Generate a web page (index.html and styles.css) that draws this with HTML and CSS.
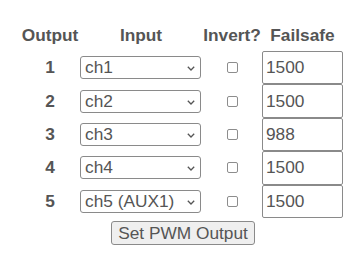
FILE: index.html
```html
<!DOCTYPE html>
<html>
<head>
<meta charset="utf-8">
<link rel="stylesheet" href="styles.css">
</head>
<body>
<form class="pwm">
  <div class="grid">
    <div class="th">Output</div>
    <div class="th">Input</div>
    <div class="th">Invert?</div>
    <div class="th">Failsafe</div>

    <div class="num">1</div>
    <div class="cell"><span class="selwrap"><select class="sel"><option selected>ch1</option><option>ch2</option><option>ch3</option><option>ch4</option><option>ch5 (AUX1)</option></select><svg class="chev" width="8" height="5" viewBox="0 0 8 5"><path d="M0.8 0.8 L4 4 L7.2 0.8" fill="none" stroke="#555" stroke-width="1.3"/></svg></span></div>
    <div class="cell"><input class="chk" type="checkbox"></div>
    <div class="cell"><input class="txt" type="text" value="1500"></div>

    <div class="num">2</div>
    <div class="cell"><span class="selwrap"><select class="sel"><option>ch1</option><option selected>ch2</option><option>ch3</option><option>ch4</option><option>ch5 (AUX1)</option></select><svg class="chev" width="8" height="5" viewBox="0 0 8 5"><path d="M0.8 0.8 L4 4 L7.2 0.8" fill="none" stroke="#555" stroke-width="1.3"/></svg></span></div>
    <div class="cell"><input class="chk" type="checkbox"></div>
    <div class="cell"><input class="txt" type="text" value="1500"></div>

    <div class="num">3</div>
    <div class="cell"><span class="selwrap"><select class="sel"><option>ch1</option><option>ch2</option><option selected>ch3</option><option>ch4</option><option>ch5 (AUX1)</option></select><svg class="chev" width="8" height="5" viewBox="0 0 8 5"><path d="M0.8 0.8 L4 4 L7.2 0.8" fill="none" stroke="#555" stroke-width="1.3"/></svg></span></div>
    <div class="cell"><input class="chk" type="checkbox"></div>
    <div class="cell"><input class="txt" type="text" value="988"></div>

    <div class="num">4</div>
    <div class="cell"><span class="selwrap"><select class="sel"><option>ch1</option><option>ch2</option><option>ch3</option><option selected>ch4</option><option>ch5 (AUX1)</option></select><svg class="chev" width="8" height="5" viewBox="0 0 8 5"><path d="M0.8 0.8 L4 4 L7.2 0.8" fill="none" stroke="#555" stroke-width="1.3"/></svg></span></div>
    <div class="cell"><input class="chk" type="checkbox"></div>
    <div class="cell"><input class="txt" type="text" value="1500"></div>

    <div class="num">5</div>
    <div class="cell"><span class="selwrap"><select class="sel"><option>ch1</option><option>ch2</option><option>ch3</option><option>ch4</option><option selected>ch5 (AUX1)</option></select><svg class="chev" width="8" height="5" viewBox="0 0 8 5"><path d="M0.8 0.8 L4 4 L7.2 0.8" fill="none" stroke="#555" stroke-width="1.3"/></svg></span></div>
    <div class="cell"><input class="chk" type="checkbox"></div>
    <div class="cell"><input class="txt" type="text" value="1500"></div>

    <div class="actions"><button class="btn" type="button">Set PWM Output</button></div>
  </div>
</form>
</body>
</html>
```

FILE: styles.css
```css
html, body {
  margin: 0;
  padding: 0;
  background: #ffffff;
}
body {
  font-family: "Liberation Sans", Arial, sans-serif;
  font-size: 17.3px;
  color: #555555;
}
.pwm {
  padding: 25px 0 0 20px;
}
.grid {
  display: grid;
  grid-template-columns: 60px 122px 60px 81px;
  grid-template-rows: 26px repeat(5, 33.4px) auto;
  width: 323px;
}
.th {
  font-weight: bold;
  text-align: center;
  line-height: 20px;
  white-space: nowrap;
}
.num {
  font-weight: bold;
  display: flex;
  align-items: center;
  justify-content: center;
}
.cell {
  display: flex;
  align-items: center;
  justify-content: center;
}
.selwrap {
  position: relative;
  display: block;
  width: 121px;
  height: 23px;
  margin-right: 1px;
}
.sel {
  -webkit-appearance: none;
  appearance: none;
  box-sizing: border-box;
  display: block;
  width: 121px;
  height: 23px;
  margin: 0;
  font-family: inherit;
  font-size: 17.3px;
  line-height: 21px;
  color: #555555;
  border: 1px solid #8a8a8a;
  border-radius: 3px;
  background: #ffffff;
  padding: 0 16px 0 4px;
}
.chev {
  position: absolute;
  right: 6px;
  top: 10px;
  pointer-events: none;
}
.chk {
  -webkit-appearance: none;
  appearance: none;
  box-sizing: border-box;
  width: 11px;
  height: 11px;
  margin: 0;
  border: 1px solid #8d8d8d;
  border-radius: 2px;
  background: #ffffff;
}
.txt {
  box-sizing: border-box;
  width: 81px;
  height: 33.4px;
  margin: 0;
  padding: 0 3px;
  font-family: inherit;
  font-size: 17.3px;
  color: #555555;
  border: 1px solid #8a8a8a;
  border-radius: 2px;
}
.actions {
  grid-column: 1 / -1;
  display: flex;
  justify-content: center;
  padding: 3px 0 0 3px;
}
.btn {
  box-sizing: border-box;
  height: 24px;
  padding: 0 6px;
  font-family: inherit;
  font-size: 17.3px;
  color: #555555;
  background: #efefef;
  border: 1px solid #8a8a8a;
  border-radius: 3px;
  line-height: 20px;
}
```
